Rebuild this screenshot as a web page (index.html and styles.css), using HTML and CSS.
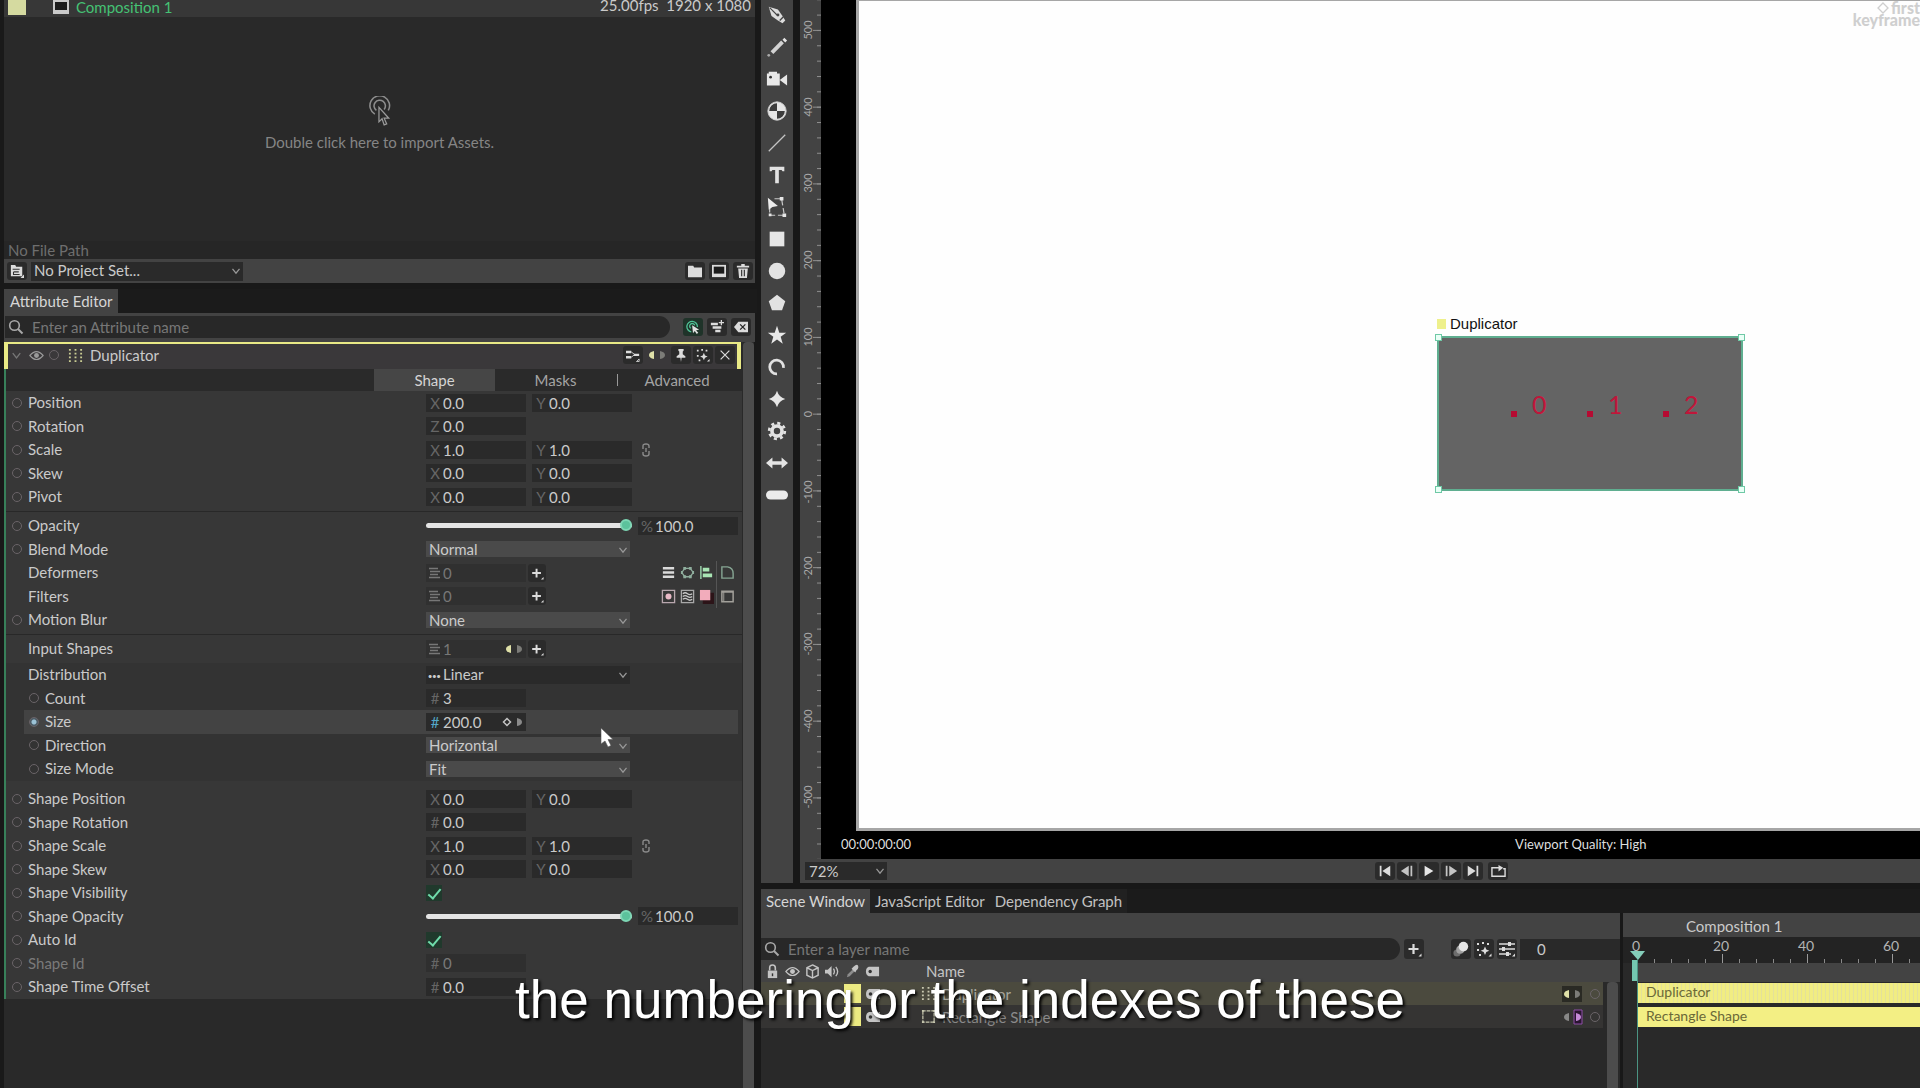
FILE: index.html
```html
<!DOCTYPE html>
<html lang="en">
<head>
<meta charset="utf-8">
<title>Composition 1</title>
<link rel="stylesheet" href="styles.css">
</head>
<body>
<svg class="defs" aria-hidden="true">
  <symbol id="chev" viewBox="0 0 16 16"><path d="M4 5.500l4 5 4-5" fill="none" stroke="currentColor" stroke-width="1.400"/></symbol>
  <symbol id="search" viewBox="0 0 16 16"><circle cx="6.500" cy="6.500" r="4.800" fill="none" stroke="currentColor" stroke-width="1.600"/><path d="M10 10l4.500 4.500" stroke="currentColor" stroke-width="2"/></symbol>
  <symbol id="comp" viewBox="0 0 16 16"><path d="M0 1h16v14H0z" fill="currentColor"/><path d="M2 3h12v8H2z" fill="#1c1c1c"/></symbol>
  <symbol id="folder" viewBox="0 0 16 16"><path d="M0 2h6l1 2h9v11H0z" fill="currentColor"/></symbol>
  <symbol id="trash" viewBox="0 0 16 16"><path d="M6 0h4v2h5v2H1V2h5zM2.500 5h11l-1 11h-9z" fill="currentColor"/><path d="M6.500 6.500v7.500M9.500 6.500v7.500" stroke="#222" stroke-width="1.200"/></symbol>
  <symbol id="project" viewBox="0 0 16 16"><path d="M1 1h5l1 2h7v11H1z" fill="currentColor"/><path d="M3 6h8M4 9h6M4 9v3h7" fill="none" stroke="#333" stroke-width="1.200"/><path d="M12 16h4v-4z" fill="currentColor"/></symbol>
  <symbol id="eye" viewBox="0 0 16 16"><path d="M1 8q7-8.500 14 0-7 8.500-14 0z" fill="none" stroke="currentColor" stroke-width="1.300"/><circle cx="8" cy="8" r="2.600" fill="currentColor"/></symbol>
  <symbol id="grid" viewBox="0 0 16 16"><path d="M1 1h2v2H1zM7 1h2v2H7zM13 1h2v2h-2zM1 5h2v2H1zM7 5h2v2H7zM13 5h2v2h-2zM1 9h2v2H1zM7 9h2v2H7zM13 9h2v2h-2zM1 13h2v2H1zM7 13h2v2H7zM13 13h2v2h-2z" fill="currentColor"/></symbol>
  <symbol id="link" viewBox="0 0 16 16"><path d="M5 7V4q0-2 3-2t3 2v2M11 9v3q0 2-3 2t-3-2v-2M8 6v4" fill="none" stroke="currentColor" stroke-width="1.400"/></symbol>
  <symbol id="plus" viewBox="0 0 16 16"><path d="M7.500 3v10M2.500 8h10" stroke="currentColor" stroke-width="2.200"/><path d="M12.500 15.500h3v-3z" fill="currentColor"/></symbol>
  <symbol id="list" viewBox="0 0 16 16"><path d="M2 3.500h9M3 6.500h10M3 9.500h8M2 12.500h11" stroke="currentColor" stroke-width="1.300"/></symbol>
  <symbol id="arrows" viewBox="0 0 24 16"><path d="M9 4v8q-5-1-5-4t5-4z" fill="#dfe0a8"/><path d="M15 4v8q5-1 5-4t-5-4z" fill="#7c7c78"/></symbol>
  <symbol id="keyed" viewBox="0 0 24 16"><path d="M5 4.500l3.500 3.500-3.500 3.500-3.500-3.500z" fill="none" stroke="#c4c4c4" stroke-width="1.500"/><path d="M15 4v8q5-1 5-4t-5-4z" fill="#8a8a8a"/></symbol>
  <symbol id="click" viewBox="0 0 16 16"><path d="M6 13.500A6 6 0 1 1 13 8M5.500 9.500A3 3 0 1 1 10 6" fill="none" stroke="#4fc296" stroke-width="1.500"/><path d="M7 6l8 5-3.500.700 2.500 3-1.700 1.200-2.300-3.200-2 2.300z" fill="#e0e0e0"/></symbol>
  <symbol id="addlayer" viewBox="0 0 16 16"><path d="M1 3h8v3H1zM3 7h10v3H3zM6 11h6v3H6z" fill="currentColor"/><path d="M13 0v6M10 3h6" stroke="currentColor" stroke-width="1.500"/></symbol>
  <symbol id="clear" viewBox="0 0 16 16"><path d="M0 8l5-6h11v12H5z" fill="currentColor"/><path d="M7 5l6 6M13 5l-6 6" stroke="#262626" stroke-width="1.500"/></symbol>
  <symbol id="tag" viewBox="0 0 16 16"><path d="M4 3h11v10H4Q1 12 1 8t3-5z" fill="currentColor"/><circle cx="5.500" cy="8" r="1.800" fill="#333"/></symbol>
  <symbol id="nodes" viewBox="0 0 16 16"><path d="M0 3h6v3H0zM0 9h6v3H0zM9 6.500h6v2.500H9z" fill="currentColor"/><path d="M6 4.500l4 3-4 3M12 15.500h3v-3z" fill="none" stroke="currentColor"/></symbol>
  <symbol id="pin" viewBox="0 0 16 16"><path d="M5 1h6v2l-1 1v3l3 2.500V11H8.700L8 16l-.700-5H3V9.500L6 7V4L5 3z" fill="currentColor"/></symbol>
  <symbol id="spark" viewBox="0 0 16 16"><path d="M1 2h2v2H1zM6 1h2v2H6zM11 2h2v2h-2zM1 8h2v2H1zM3 13h2v2H3zM12.500 15.500h3v-3z" fill="currentColor"/><path d="M9 5.500l1.300 3 3 1.300-3 1.300-1.300 3-1.300-3-3-1.300 3-1.300z" fill="currentColor"/></symbol>
  <symbol id="cross" viewBox="0 0 16 16"><path d="M3 3l10 10M13 3L3 13" stroke="currentColor" stroke-width="1.400"/></symbol>
  <symbol id="bars" viewBox="0 0 16 16"><path d="M2 3.500h12M2 8h12M2 12.500h12" stroke="#dadada" stroke-width="2.600"/></symbol>
  <symbol id="hex" viewBox="0 0 16 16"><path d="M5 3.500h6L14 8l-3 4.500H5L2 8z" fill="none" stroke="#8fae9d" stroke-width="1.400"/><path d="M3.500 2h3v3h-3zM9.500 2h3v3h-3zM3.500 11h3v3h-3zM9.500 11h3v3h-3zM1 6.500h2v3H1zM13 6.500h2v3h-2z" fill="#8fae9d"/></symbol>
  <symbol id="align" viewBox="0 0 16 16"><path d="M2 1v14" stroke="#9fd8af" stroke-width="1.500"/><path d="M4 3h7v4H4zM4 9h10v4H4z" fill="#a9e5b4"/></symbol>
  <symbol id="corner" viewBox="0 0 16 16"><path d="M2 2h6q6 1 6 7v5H2z" fill="none" stroke="#86a593" stroke-width="1.500"/></symbol>
  <symbol id="glow" viewBox="0 0 16 16"><path d="M1.500 1.500h13v13h-13z" fill="none" stroke="#b9a7ae" stroke-width="1.400"/><circle cx="8" cy="8" r="3.200" fill="#e8b9c6"/></symbol>
  <symbol id="waves" viewBox="0 0 16 16"><path d="M1.500 1.500h13v13h-13z" fill="none" stroke="#a8a8a8" stroke-width="1.400"/><path d="M3 5q2.500-2 5 0t5 0M3 8q2.500-2 5 0t5 0M3 11q2.500-2 5 0t5 0" fill="none" stroke="#c8c8c8" stroke-width="1.300"/></symbol>
  <symbol id="fill" viewBox="0 0 16 16"><path d="M4 4h12v12H4z" fill="#2c1418"/><path d="M1 1h11v11H1z" fill="#f2acbb"/></symbol>
  <symbol id="frame" viewBox="0 0 16 16"><path d="M2 2.500h12v11H2z" fill="none" stroke="#a2a09a" stroke-width="1.600"/><path d="M2 3.500h12M4 3v10" stroke="#a2a09a"/></symbol>
  <symbol id="lock" viewBox="0 0 16 16"><path d="M3 7h10v8H3z" fill="currentColor"/><path d="M5 7V4q0-3 3-3t3 3v3" fill="none" stroke="currentColor" stroke-width="1.700"/><path d="M8 10v3" stroke="#333" stroke-width="1.500"/></symbol>
  <symbol id="cube" viewBox="0 0 16 16"><path d="M8 1l6 3v8l-6 3-6-3V4zM2 4l6 3 6-3M8 7v8" fill="none" stroke="currentColor" stroke-width="1.500"/></symbol>
  <symbol id="sound" viewBox="0 0 16 16"><path d="M0 6h3l4-4v12l-4-4H0z" fill="currentColor"/><path d="M9 5q2 3 0 6M11.500 3q4 5 0 10" fill="none" stroke="currentColor" stroke-width="1.400"/></symbol>
  <symbol id="dropper" viewBox="0 0 16 16"><path d="M2 14l1-3 6-6 2 2-6 6z" fill="#8c8c8c"/><path d="M9 3q4-4 5-1t-2 5l-1 2-4-4z" fill="currentColor"/></symbol>
  <symbol id="box" viewBox="0 0 16 16"><path d="M2 2v12h12V2z" fill="none" stroke="currentColor" stroke-width="1.300" stroke-dasharray="4 1"/><path d="M1 1h2v2H1zM13 1h2v2h-2zM1 13h2v2H1zM13 13h2v2h-2z" fill="currentColor"/></symbol>
  <symbol id="balls" viewBox="0 0 20 20"><circle cx="5" cy="15" r="4.500" fill="#6d6d6d"/><circle cx="9" cy="11" r="5" fill="#a0a0a0"/><circle cx="13" cy="7" r="6" fill="#e6e6e6"/></symbol>
  <symbol id="sliders" viewBox="0 0 16 16"><path d="M0 3h16M0 8h16M0 13h12" stroke="currentColor" stroke-width="1.400"/><path d="M9 1h3v4H9zM3 6h3v4H3zM7 11h3v4H7zM13 15.500h3v-3z" fill="currentColor"/></symbol>
</svg>

<div class="app">
  <aside class="side">
    <section class="assets">
      <div class="asset-row">
        <span class="swatch"></span>
        <svg class="ic"><use href="#comp"/></svg>
        <span class="asset-name">Composition 1</span>
        <span class="asset-meta">25.00fps&nbsp; 1920 x 1080</span>
      </div>
      <div class="asset-drop">
        <svg class="drop-ic" viewBox="0 0 24 30"><path d="M7 17.500A9.500 9.500 0 1 1 20 14M8.500 14A5.500 5.500 0 1 1 16 13" fill="none" stroke="#8d8d8d" stroke-width="1.500"/><path d="M11 11v14l3-3 2 6 2.500-1-2.500-5.500h4.500z" fill="#292929" stroke="#9a9a9a" stroke-width="1.200"/></svg>
        <p>Double click here to import Assets.</p>
      </div>
      <p class="path">No File Path</p>
      <div class="asset-bar">
        <button class="ib" aria-label="Project settings"><svg><use href="#project"/></svg></button>
        <span class="sel dark project"><select aria-label="Project set"><option>No Project Set...</option></select><svg><use href="#chev"/></svg></span>
        <span class="bar-end">
          <button class="ib" aria-label="New folder"><svg><use href="#folder"/></svg></button>
          <button class="ib" aria-label="New composition"><svg><use href="#comp"/></svg></button>
          <button class="ib" aria-label="Delete"><svg><use href="#trash"/></svg></button>
        </span>
      </div>
    </section>

    <div class="tabs side-tabs"><button class="tab on">Attribute Editor</button></div>
    <div class="attr-search">
      <label class="search"><svg><use href="#search"/></svg><input placeholder="Enter an Attribute name" aria-label="Attribute name"></label>
      <span class="search-end">
        <button class="ib dark-green" aria-label="Follow selection"><svg><use href="#click"/></svg></button>
        <button class="ib" aria-label="Add layer"><svg><use href="#addlayer"/></svg></button>
        <button class="ib" aria-label="Clear"><svg><use href="#clear"/></svg></button>
      </span>
    </div>
    <div class="attr-body">
      <div class="attr-col">
        <header class="attr-head">
          <svg class="hi mute"><use href="#chev"/></svg>
          <svg class="hi"><use href="#eye"/></svg>
          <button class="key" aria-label="Key layer"></button>
          <svg class="hi gridic"><use href="#grid"/></svg>
          <h2>Duplicator</h2>
          <span class="head-end">
            <button class="ib" aria-label="Nodes"><svg><use href="#nodes"/></svg></button>
            <svg class="pair"><use href="#arrows"/></svg>
            <button class="ib" aria-label="Pin"><svg><use href="#pin"/></svg></button>
            <button class="ib" aria-label="Presets"><svg><use href="#spark"/></svg></button>
            <button class="ib" aria-label="Close"><svg><use href="#cross"/></svg></button>
          </span>
        </header>
        <div class="attrs">
          <nav class="attr-tabs"><button class="atab on">Shape</button><button class="atab">Masks</button><button class="atab last">Advanced</button></nav>
          <div class="group">
            <div class="row"><button class="key" aria-label="Key position"></button><span class="lab">Position</span><label class="field"><span>X</span><input aria-label="Position X" value="0.0"></label><label class="field"><span>Y</span><input aria-label="Position Y" value="0.0"></label></div>
            <div class="row"><button class="key" aria-label="Key rotation"></button><span class="lab">Rotation</span><label class="field"><span>Z</span><input aria-label="Rotation Z" value="0.0"></label></div>
            <div class="row"><button class="key" aria-label="Key scale"></button><span class="lab">Scale</span><label class="field"><span>X</span><input aria-label="Scale X" value="1.0"></label><label class="field"><span>Y</span><input aria-label="Scale Y" value="1.0"></label><button class="lk" aria-label="Link scale"><svg><use href="#link"/></svg></button></div>
            <div class="row"><button class="key" aria-label="Key skew"></button><span class="lab">Skew</span><label class="field"><span>X</span><input aria-label="Skew X" value="0.0"></label><label class="field"><span>Y</span><input aria-label="Skew Y" value="0.0"></label></div>
            <div class="row"><button class="key" aria-label="Key pivot"></button><span class="lab">Pivot</span><label class="field"><span>X</span><input aria-label="Pivot X" value="0.0"></label><label class="field"><span>Y</span><input aria-label="Pivot Y" value="0.0"></label></div>
          </div>
          <div class="group">
            <div class="row"><button class="key" aria-label="Key opacity"></button><label class="lab" for="op">Opacity</label><input id="op" type="range" value="100"><label class="field"><span>%</span><input aria-label="Opacity percent" value="100.0"></label></div>
            <div class="row"><button class="key" aria-label="Key blend mode"></button><label class="lab" for="bm">Blend Mode</label><span class="sel"><select id="bm"><option>Normal</option></select><svg><use href="#chev"/></svg></span></div>
            <div class="row many"><i class="nokey"></i><label class="lab" for="df">Deformers</label><span class="field dim"><svg><use href="#list"/></svg><input id="df" value="0" readonly></span><button class="ib" aria-label="Add deformer"><svg><use href="#plus"/></svg></button>
              <span class="quick"><button class="qb" aria-label="Stack"><svg><use href="#bars"/></svg></button><button class="qb" aria-label="Polygon"><svg><use href="#hex"/></svg></button><button class="qb" aria-label="Align"><svg><use href="#align"/></svg></button><i class="vr"></i><button class="qb" aria-label="Round corners"><svg><use href="#corner"/></svg></button></span></div>
            <div class="row many"><i class="nokey"></i><label class="lab" for="fl">Filters</label><span class="field dim"><svg><use href="#list"/></svg><input id="fl" value="0" readonly></span><button class="ib" aria-label="Add filter"><svg><use href="#plus"/></svg></button>
              <span class="quick"><button class="qb" aria-label="Glow"><svg><use href="#glow"/></svg></button><button class="qb" aria-label="Distort"><svg><use href="#waves"/></svg></button><button class="qb" aria-label="Fill"><svg><use href="#fill"/></svg></button><i class="vr"></i><button class="qb" aria-label="Frame"><svg><use href="#frame"/></svg></button></span></div>
            <div class="row"><button class="key" aria-label="Key motion blur"></button><label class="lab" for="mb">Motion Blur</label><span class="sel"><select id="mb"><option>None</option></select><svg><use href="#chev"/></svg></span></div>
          </div>
          <div class="group shade">
            <div class="row many"><i class="nokey"></i><label class="lab" for="is">Input Shapes</label><span class="field dim"><svg><use href="#list"/></svg><input id="is" value="1" readonly><svg class="pair"><use href="#arrows"/></svg></span><button class="ib" aria-label="Add input shape"><svg><use href="#plus"/></svg></button></div>
            <div class="sub">
              <div class="row"><i class="nokey"></i><label class="lab" for="di">Distribution</label><span class="sel dark dots"><select id="di"><option>Linear</option></select><svg><use href="#chev"/></svg></span></div>
              <div class="row in"><button class="key" aria-label="Key count"></button><label class="lab" for="ct">Count</label><span class="field"><span>#</span><input id="ct" value="3"></span></div>
              <div class="row in hot"><button class="key set" aria-label="Key size"></button><label class="lab" for="sz">Size</label><span class="field keyed"><span>#</span><input id="sz" value="200.0"><svg class="pair"><use href="#keyed"/></svg></span></div>
              <div class="row in"><button class="key" aria-label="Key direction"></button><label class="lab" for="dr">Direction</label><span class="sel"><select id="dr"><option>Horizontal</option></select><svg><use href="#chev"/></svg></span></div>
              <div class="row in"><button class="key" aria-label="Key size mode"></button><label class="lab" for="sm">Size Mode</label><span class="sel"><select id="sm"><option>Fit</option></select><svg><use href="#chev"/></svg></span></div>
            </div>
          </div>
          <div class="group last">
            <div class="row"><button class="key" aria-label="Key shape position"></button><span class="lab">Shape Position</span><label class="field"><span>X</span><input aria-label="Shape position X" value="0.0"></label><label class="field"><span>Y</span><input aria-label="Shape position Y" value="0.0"></label></div>
            <div class="row"><button class="key" aria-label="Key shape rotation"></button><span class="lab">Shape Rotation</span><label class="field"><span>#</span><input aria-label="Shape rotation" value="0.0"></label></div>
            <div class="row"><button class="key" aria-label="Key shape scale"></button><span class="lab">Shape Scale</span><label class="field"><span>X</span><input aria-label="Shape scale X" value="1.0"></label><label class="field"><span>Y</span><input aria-label="Shape scale Y" value="1.0"></label><button class="lk" aria-label="Link shape scale"><svg><use href="#link"/></svg></button></div>
            <div class="row"><button class="key" aria-label="Key shape skew"></button><span class="lab">Shape Skew</span><label class="field"><span>X</span><input aria-label="Shape skew X" value="0.0"></label><label class="field"><span>Y</span><input aria-label="Shape skew Y" value="0.0"></label></div>
            <div class="row"><button class="key" aria-label="Key shape visibility"></button><label class="lab" for="sv">Shape Visibility</label><input id="sv" type="checkbox" checked></div>
            <div class="row"><button class="key" aria-label="Key shape opacity"></button><label class="lab" for="so">Shape Opacity</label><input id="so" type="range" value="100"><label class="field"><span>%</span><input aria-label="Shape opacity percent" value="100.0"></label></div>
            <div class="row"><button class="key" aria-label="Key auto id"></button><label class="lab" for="ai">Auto Id</label><input id="ai" type="checkbox" checked></div>
            <div class="row off"><button class="key" aria-label="Key shape id"></button><label class="lab" for="si">Shape Id</label><span class="field"><span>#</span><input id="si" value="0" readonly></span></div>
            <div class="row"><button class="key" aria-label="Key shape time offset"></button><label class="lab" for="st">Shape Time Offset</label><span class="field"><span>#</span><input id="st" value="0.0"></span></div>
          </div>
        </div>
      </div>
      <div class="thumb"></div>
    </div>
  </aside>

  <main class="main">
    <div class="stage">
      <nav class="tools">
        <button aria-label="Pen"><svg viewBox="0 0 24 24"><path d="M3 3l10 3 5 7 3 5-3 3-5-3-7-5z" fill="#dcdcdc"/><path d="M4 4l8 8" stroke="#444" stroke-width="1.200"/><circle cx="13" cy="12" r="1.600" fill="#444"/><path d="M15 18l4-4" stroke="#444" stroke-width="1.500"/></svg></button>
        <button aria-label="Pencil"><svg viewBox="0 0 24 24"><path d="M5 16.500L16.500 5l3 3L8 19.500z" fill="#d2d2d2"/><path d="M18 4l2-2 3 3-2 2z" fill="#e6e6e6"/><circle cx="3" cy="21" r="1.500" fill="#aaa"/></svg></button>
        <button aria-label="Camera"><svg viewBox="0 0 24 24"><path d="M1 6h14v13H1zM3 4h9v3H3zM15 13l8-6v12z" fill="#e8e8e8"/><circle cx="5" cy="10" r="1.500" fill="#333"/></svg></button>
        <button aria-label="Null"><svg viewBox="0 0 24 24"><circle cx="12" cy="12" r="10" fill="#e6e6e6" stroke="#ccc"/><path d="M12 12V3.500A8.500 8.500 0 0 0 3.500 12zM12 12v8.500a8.500 8.500 0 0 0 8.500-8.500z" fill="#3c3c3c"/></svg></button>
        <button aria-label="Line"><svg viewBox="0 0 24 24"><path d="M3 21L21 3" stroke="#c4c4c4" stroke-width="1.300"/></svg></button>
        <button aria-label="Text"><svg viewBox="0 0 24 24"><path d="M4 3h16v5h-2l-1-1.500h-3V21h-4V6.500H7L6 8H4z" fill="#e2e2e2"/></svg></button>
        <button aria-label="Edit shape"><svg viewBox="0 0 24 24"><path d="M4 12v9h16L17 3H8" fill="none" stroke="#c8c8c8" stroke-width="1.300" stroke-dasharray="6 3"/><path d="M2 2l11 9-6 1-4 3z" fill="#ececec"/><path d="M3 19h3v3H3zM18 19h4v4h-4zM15 1h4v4h-4z" fill="#e6e6e6"/></svg></button>
        <button aria-label="Rectangle"><svg viewBox="0 0 24 24"><path d="M4 4h16v16H4z" fill="#e6e6e6"/></svg></button>
        <button aria-label="Ellipse"><svg viewBox="0 0 24 24"><circle cx="12" cy="12" r="9" fill="#e2e2e2"/></svg></button>
        <button aria-label="Polygon"><svg viewBox="0 0 24 24"><path d="M12 3l9 7-3.500 10h-11L3 10z" fill="#e2e2e2"/></svg></button>
        <button aria-label="Star"><svg viewBox="0 0 24 24"><path d="M12 2l2.500 7.500H22l-6 4.500 2.300 7.500L12 17l-6.300 4.500L8 14 2 9.500h7.500z" fill="#e8e8e8"/></svg></button>
        <button aria-label="Arc"><svg viewBox="0 0 24 24"><path d="M12 19.500A7.500 7.500 0 1 1 19 13" fill="none" stroke="#e0e0e0" stroke-width="3"/></svg></button>
        <button aria-label="Super ellipse"><svg viewBox="0 0 24 24"><path d="M12 3q2 7 9 9-7 2-9 9-2-7-9-9 7-2 9-9z" fill="#e6e6e6"/></svg></button>
        <button aria-label="Cog"><svg viewBox="0 0 24 24"><circle cx="12" cy="12" r="5.500" fill="none" stroke="#e2e2e2" stroke-width="4"/><circle cx="12" cy="12" r="8.500" fill="none" stroke="#e2e2e2" stroke-width="3" stroke-dasharray="3.340 3.335"/></svg></button>
        <button aria-label="Arrow"><svg viewBox="0 0 24 24"><path d="M0 12l7-6v4h10V6l7 6-7 6v-4H7v4z" fill="#e4e4e4"/></svg></button>
        <button aria-label="Capsule"><svg viewBox="0 0 24 24"><rect x="0" y="7" width="24" height="10" rx="5" fill="#ebebeb"/></svg></button>
      </nav>
      <div class="view">
        <div class="canvas-row">
          <svg class="ruler" aria-label="Vertical ruler">
            <defs><pattern id="vt" width="21" height="15.350" y="14.600" patternUnits="userSpaceOnUse"><path d="M17 .500h4" stroke="#8f8f8f"/></pattern>
            <pattern id="vm" width="21" height="76.750" y="29.900" patternUnits="userSpaceOnUse"><path d="M13 .500h8" stroke="#8f8f8f"/></pattern></defs>
            <rect width="21" height="100%" fill="url(#vt)"/><rect width="21" height="100%" fill="url(#vm)"/>
            <g class="rl">
              <text transform="translate(12 30) rotate(-90)">500</text><text transform="translate(12 107) rotate(-90)">400</text><text transform="translate(12 183) rotate(-90)">300</text><text transform="translate(12 260) rotate(-90)">200</text><text transform="translate(12 337) rotate(-90)">100</text><text transform="translate(12 414) rotate(-90)">0</text><text transform="translate(12 492) rotate(-90)">-100</text><text transform="translate(12 568) rotate(-90)">-200</text><text transform="translate(12 644) rotate(-90)">-300</text><text transform="translate(12 721) rotate(-90)">-400</text><text transform="translate(12 797) rotate(-90)">-500</text>
            </g>
          </svg>
          <div class="screen">
            <div class="canvas">
              <div class="node-label"><i></i>Duplicator</div>
              <div class="node"><b class="h tl"></b><b class="h tr"></b><b class="h bl"></b><b class="h br"></b>
                <span class="pt p0">0</span><span class="pt p1">1</span><span class="pt p2">2</span></div>
              <div class="mark"><span><svg viewBox="0 0 12 12"><path d="M6 1l5 5-5 5-5-5z" fill="none" stroke="#cfcfcf" stroke-width="1.300"/></svg>first</span><span>keyframe</span></div>
            </div>
            <div class="status"><span>00:00:00:00</span><span class="quality">Viewport Quality: High</span></div>
          </div>
        </div>
        <div class="view-bar">
          <span class="sel dark zoom"><select aria-label="Zoom"><option>72%</option></select><svg><use href="#chev"/></svg></span>
          <span class="play">
            <button class="ib" aria-label="First frame"><svg viewBox="0 0 16 16"><path d="M2 2h2v12H2zM14 2v12L5 8z" fill="#dcdcdc"/></svg></button>
            <button class="ib" aria-label="Previous frame"><svg viewBox="0 0 16 16"><path d="M10 2v12L1 8zM12 2h2v12h-2z" fill="#c4c4c4"/></svg></button>
            <button class="ib" aria-label="Play"><svg viewBox="0 0 16 16"><path d="M3 2v12l10-6z" fill="#e6e6e6"/></svg></button>
            <button class="ib" aria-label="Next frame"><svg viewBox="0 0 16 16"><path d="M6 2v12l9-6zM2 2h2v12H2z" fill="#c4c4c4"/></svg></button>
            <button class="ib" aria-label="Last frame"><svg viewBox="0 0 16 16"><path d="M2 2v12l9-6zM12 2h2v12h-2z" fill="#dcdcdc"/></svg></button>
            <button class="ib loop" aria-label="Loop"><svg viewBox="0 0 16 16"><path d="M4 4H1v9h14V5h-2M4 4h5" fill="none" stroke="#dcdcdc" stroke-width="1.500"/><path d="M8 1l5 3-5 4z" fill="#dcdcdc"/></svg></button>
          </span>
        </div>
      </div>
    </div>

    <div class="tabs scene-tabs"><button class="tab on">Scene Window</button><button class="tab">JavaScript Editor</button><button class="tab">Dependency Graph</button></div>
    <div class="scene">
      <section class="layers">
        <div class="layer-bar">
          <label class="search"><svg><use href="#search"/></svg><input placeholder="Enter a layer name" aria-label="Layer name"></label>
          <button class="ib add" aria-label="Add"><svg><use href="#plus"/></svg></button>
          <button class="ib" aria-label="Motion blur"><svg><use href="#balls"/></svg></button>
          <button class="ib" aria-label="Effects"><svg><use href="#spark"/></svg></button>
          <button class="ib" aria-label="Settings"><svg><use href="#sliders"/></svg></button>
          <input class="frame" aria-label="Frame" value="0">
        </div>
        <div class="layer-head"><svg><use href="#lock"/></svg><svg><use href="#eye"/></svg><svg><use href="#cube"/></svg><svg><use href="#sound"/></svg><svg><use href="#dropper"/></svg><svg><use href="#tag"/></svg><span>Name</span></div>
        <div class="layer-body">
          <div class="layer-rows">
            <div class="layer sel-row"><i></i><svg class="tg"><use href="#tag"/></svg><svg class="lt"><use href="#grid"/></svg><span>Duplicator</span><svg class="pair boxed" viewBox="0 0 24 16"><path d="M2 0h20v16H2z" fill="#2a2a24"/><use href="#arrows"/></svg><b class="key"></b></div>
            <div class="layer"><i></i><svg class="tg"><use href="#tag"/></svg><svg class="lt"><use href="#box"/></svg><span>Rectangle Shape</span><svg class="pair" viewBox="0 0 24 16"><path d="M9 4v8q-5-1-5-4t5-4z" fill="#888"/><path d="M14 1h8v14h-8z" fill="#2a1530" stroke="#8f4fa8"/><path d="M16 4v8q5-1 5-4t-5-4z" fill="#c58ad8"/></svg><b class="key"></b></div>
          </div>
          <div class="thumb"></div>
        </div>
      </section>
      <section class="timeline">
        <h3>Composition 1</h3>
        <svg class="truler" aria-label="Timeline ruler">
          <defs><pattern id="tm" width="17" height="26" x="14" patternUnits="userSpaceOnUse"><path d="M.500 22v4" stroke="#8a8a8a"/></pattern><pattern id="tM" width="85" height="26" x="14" patternUnits="userSpaceOnUse"><path d="M.500 17v9" stroke="#9a9a9a"/></pattern></defs>
          <rect x="14" width="100%" height="26" fill="url(#tm)"/><rect x="14" width="100%" height="26" fill="url(#tM)"/>
          <text x="13" y="14">0</text><text x="98" y="14">20</text><text x="183" y="14">40</text><text x="268" y="14">60</text>
        </svg>
        <div class="range"></div>
        <div class="bars"><div class="clip grain">Duplicator</div><div class="clip">Rectangle Shape</div></div>
        <svg class="head" viewBox="0 0 16 137" preserveAspectRatio="xMidYMin slice"><path d="M0 0h15L8 9z" fill="#84cdb9"/><path d="M2 9h5v21H2z" fill="#74c7b0"/><path d="M7.500 8v140" stroke="#4b9482"/></svg>
      </section>
    </div>
  </main>
</div>
<svg class="cursor" viewBox="0 0 14 22"><path d="M1 1v16l4-3 3 6 3-1.500-3-6h5z" fill="#fff" stroke="#555" stroke-width=".600"/></svg>
<p class="caption">the numbering or the indexes of these</p>
</body>
</html>
```
FILE: styles.css
```css
* { box-sizing: border-box; margin: 0; padding: 0; }
body { background: #181818; color: #cacaca; font: 15px/18px Lato, "Liberation Sans", sans-serif; overflow: hidden; }
button, input, select { font: inherit; color: inherit; background: none; border: 0; outline: 0; min-width: 0; }
svg { display: block; width: 16px; height: 16px; flex: none; }
.defs { position: absolute; width: 0; height: 0; }
.app { display: grid; grid-template-columns: 761px 1fr; height: 100vh; }

/* shared controls */
.ib { width: 20px; height: 18px; display: grid; place-items: center; background: #2b2b2b; border-radius: 3px; flex: none; color: #dcdcdc; }
.ib svg { width: 14px; height: 14px; }
.key { width: 10px; height: 10px; border: 1px solid #6a6468; border-radius: 50%; flex: none; }
.sel { display: grid; width: 204px; background: #4a4a4a; height: 16px; align-items: center; }
.sel select { grid-area: 1/1; appearance: none; width: 100%; height: 18px; line-height: 16px; padding: 0 0 2px 3px; }
.sel svg { grid-area: 1/1; justify-self: end; width: 14px; height: 14px; color: #999; pointer-events: none; }
.sel.dark { background: #2a2a2a; }
.search { display: flex; align-items: center; background: #282828; border-radius: 0 11px 11px 0; flex: 1; height: 22px; padding-left: 3px; gap: 8px; color: #a8a8a8; }
.search input { flex: 1; }
.search input::placeholder { color: #777; opacity: 1; }
.tabs { display: flex; background: #1b1b1b; flex: none; }
.tab { height: 24px; padding: 0 6px; color: #c2c2c2; background: #212121; }
.tab.on { background: #434343; color: #d6d6d6; }
.pair { width: 24px; height: 16px; }

/* assets */
.side { display: flex; flex-direction: column; padding-left: 4px; background: #191919; min-height: 0; }
.assets { display: flex; flex-direction: column; margin-right: 6px; height: 283px; background: #292929; flex: none; }
.asset-row { display: flex; align-items: center; height: 17px; padding: 0 4px; background: #373737; line-height: 14px; }
.swatch { width: 18px; height: 15px; background: #d5daa0; margin-right: 27px; align-self: flex-start; }
.asset-row .ic { margin-bottom: 4px; }
.asset-name { color: #45c274; margin-left: 7px; padding-bottom: 4px; }
.asset-meta { margin-left: auto; padding-bottom: 8px; }
.asset-drop { flex: 1; display: flex; flex-direction: column; align-items: center; justify-content: center; color: #858585; gap: 6px; padding-bottom: 12px; }
.drop-ic { width: 26px; height: 31px; }
.path { background: #262626; color: #6e6e6e; padding: 0 4px; height: 18px; }
.asset-bar { display: flex; align-items: center; gap: 4px; background: #434343; height: 24px; padding: 0 2px 0 3px; }
.project { width: 212px; height: 19px; }
.bar-end { display: flex; gap: 4px; margin-left: auto; }

/* attribute editor */
.side-tabs { margin: 6px 4px 0 0; }
.side-tabs .tab { padding: 0 5px 1px 6px; }
.attr-search { display: flex; align-items: center; background: #434343; height: 29px; margin-right: 6px; padding: 0 4px 2px 1px; flex: none; }
.search-end { display: flex; gap: 4px; padding-left: 13px; }
.dark-green { background: #1f3329; }
.attr-body { flex: 1; display: flex; background: #292929; margin-right: 7px; min-height: 0; }
.attr-col { flex: 1; }
.thumb { width: 11px; background: #4c4c4c; border-radius: 4px 4px 0 0; margin-left: 1px; }
.attr-head { display: flex; align-items: center; height: 27px; background: #3a383a; border: solid #e9ea86; border-width: 2px 4px 0; margin-right: 1px; gap: 5px; padding: 0 0 3px 1px; }
.attr-head h2 { font-size: 15px; font-weight: 400; margin-left: 2px; }
.hi { width: 15px; height: 15px; color: #9a9a9a; }
.mute { color: #777; }
.gridic { color: #c9cc93; margin-left: 4px; }
.head-end { display: flex; align-items: center; gap: 2px; margin-left: auto; padding-right: 2px; }
.attrs { border-left: 2px solid #38805a; background: #373737; }
.attr-tabs { display: flex; justify-content: flex-end; background: #2a2a2a; height: 22px; }
.atab { width: 121px; color: #a4a4a4; }
.atab.on { background: #464646; color: #d4d4d4; }
.atab.last { width: 126px; padding-right: 4px; background: linear-gradient(#999, #999) 1px 50%/1px 12px no-repeat; }
.group { border-bottom: 1px solid #282828; padding: 2px 0; }
.attr-tabs + .group { padding-top: 0; }
.group.last { border: 0; padding-bottom: 0; padding-top: 6px; }
.group.shade { border: 0; padding-bottom: 0; }
.sub { background: #333; margin-top: 2px; }
.row { display: flex; align-items: center; gap: 6px; height: 24px; padding: 0 0 1px 6px; }
.row:nth-child(even) { height: 23px; }
.nokey { width: 10px; flex: none; }
.lab { width: 392px; flex: none; padding-bottom: 1px; }
.row.in { margin-left: 18px; padding-left: 5px; }
.in .lab { width: 375px; }
.row.hot { background: #434343; margin-right: 4px; }
.key.set { background: radial-gradient(#9cc3d6 2px, #4c5c66 3px); }
.field { display: flex; align-items: center; width: 100px; height: 18px; background: #2a2a2a; flex: none; padding-left: 1px; }
.field > span { width: 16px; color: #666; text-align: center; }
.field input { flex: 1; }
.field.keyed > span { color: #54a8c8; }
.field.dim { color: #777; background: #303030; }
.off { color: #7a7a7a; }
.off .field { background: #2f2f2f; }
.many .ib { width: 18px; margin-left: -4px; }
.quick { display: flex; align-items: center; gap: 1px; margin-left: auto; padding-right: 6px; }
.qb { width: 18px; height: 18px; display: grid; place-items: center; }
.qb svg { width: 15px; height: 15px; }
.vr { width: 1px; height: 24px; background: #555; }
.lk { color: #8a8a8a; }
.dots { grid-template-columns: 16px 1fr; }
.sel.dots select { grid-area: 1/2; padding-left: 1px; }
.sel.dots svg { grid-area: 1/2; }
.dots::before { content: "···"; grid-area: 1/1; font-weight: 900; padding-left: 2px; }
.sel.dark.dots { height: 18px; }
input[type=range] { appearance: none; width: 206px; height: 12px; }
input[type=range]::-webkit-slider-runnable-track { height: 5px; border-radius: 3px; background: #e4e4e4; }
input[type=range]::-webkit-slider-thumb { appearance: none; width: 12px; height: 12px; margin-top: -4px; border-radius: 50%; background: #5cc29c; border: 2px solid #7dd6b4; }
input[type=checkbox] { appearance: none; width: 16px; height: 16px; background: #20392c; display: grid; place-items: center; }
input[type=checkbox]::before { content: ""; width: 5px; height: 11px; border: solid #6fdcab; border-width: 0 2px 2px 0; transform: rotate(40deg); }

/* viewport */
.main { display: flex; flex-direction: column; min-width: 0; }
.stage { flex: 1; display: flex; gap: 7px; min-height: 0; }
.tools { width: 32px; background: #434343; display: flex; flex-direction: column; align-items: center; }
.tools button { height: 32px; width: 32px; padding-bottom: 2px; display: grid; place-items: center; flex: none; }
.tools svg { width: 22px; height: 22px; }
.view { flex: 1; display: flex; flex-direction: column; min-width: 0; }
.canvas-row { flex: 1; display: flex; min-height: 0; background: #000; }
.ruler { width: 21px; height: 100%; background: #434343; }
.rl text { font-size: 11px; fill: #a8a8a8; text-anchor: middle; }
.screen { flex: 1; display: flex; flex-direction: column; padding-left: 35px; }
.canvas { flex: 1; background: #fefefe; border: solid #a6a6a6; border-width: 1px 0 3px 3px; position: relative; }
.node { position: absolute; left: 578px; top: 335px; width: 306px; height: 155px; background: #646464; border: 2px solid #5fae90; }
.node-label { position: absolute; left: 578px; top: 314px; display: flex; align-items: center; gap: 4px; color: #111; font: 15px/18px "Liberation Sans", sans-serif; }
.node-label i { width: 9px; height: 10px; background: #eef08c; }
.h { position: absolute; width: 7px; height: 7px; background: #e9fff6; border: 1px solid #6fc9a6; }
.tl { left: -4px; top: -4px; } .tr { right: -4px; top: -4px; } .bl { left: -4px; bottom: -4px; } .br { right: -4px; bottom: -4px; }
.pt { position: absolute; top: 51px; padding-left: 21px; font-size: 25px; line-height: 30px; color: #c0163a; }
.pt::before { content: ""; position: absolute; left: 0; top: 22px; width: 6px; height: 6px; background: #b50a32; }
.p0 { left: 72px; } .p1 { left: 148px; } .p2 { left: 224px; }
.mark { position: absolute; right: 0; top: 1px; color: #cfcfcf; font: 900 16px/12px Lato, sans-serif; display: flex; flex-direction: column; align-items: flex-end; }
.mark span { display: flex; align-items: center; gap: 2px; }
.mark svg { width: 12px; height: 12px; }
.status { height: 28px; display: flex; align-items: center; font-size: 13px; color: #dedede; margin-left: -15px; padding-bottom: 3px; }
.quality { margin-left: 604px; }
.view-bar { height: 24px; background: #434343; display: flex; align-items: center; padding-left: 5px; }
.zoom { width: 82px; height: 18px; }
.sel.zoom select { padding: 0 0 0 4px; }
.play { display: flex; gap: 2px; margin-left: 488px; }
.loop { margin-left: 3px; }
.ib.loop svg { width: 17px; height: 15px; }

/* scene window */
.scene-tabs { margin-top: 6px; }
.scene-tabs .tab { padding: 0 5px 1px; }
.scene { height: 175px; display: flex; flex: none; }
.layers { width: 859px; background: #434343; display: flex; flex-direction: column; padding-top: 25px; }
.layer-bar { display: flex; align-items: center; gap: 3px; height: 22px; flex: none; }
.layer-bar .ib { height: 20px; }
.layer-bar .ib svg { width: 16px; height: 16px; }
.layer-bar .ib.add { margin: 0 24px 0 1px; }
.frame { width: 100px; height: 21px; background: #292929; padding-left: 17px; }
.layer-head { display: flex; align-items: center; height: 22px; gap: 5px; padding-left: 4px; color: #c4c4c4; flex: none; }
.layer-head svg { width: 15px; height: 15px; }
.layer-head span { margin-left: 41px; }
.layer-body { flex: 1; display: flex; background: #292929; }
.layer-rows { flex: 1; }
.layer-body .thumb { margin: 0 2px 0 4px; }
.layer { display: flex; align-items: center; height: 23px; background: #353433; color: #8a8a8a; padding-left: 83px; }
.layer.sel-row { background: #4b4a3e; color: #a8a8a0; }
.layer i { width: 17px; height: 19px; background: #ecea82; margin-right: 4px; }
.layer .tg { color: #c4c4c4; margin-right: 40px; }
.layer .lt { color: #c8c8b0; margin-right: 6px; width: 15px; height: 15px; }
.layer .pair { margin-left: auto; }
.layer .key { margin: 0 3px 0 6px; }
.timeline { flex: 1; display: flex; flex-direction: column; background: #292929; position: relative; min-width: 0; margin-left: 3px; }
.timeline h3 { font-size: 15px; font-weight: 400; background: #434343; height: 24px; line-height: 26px; padding-left: 63px; }
.truler { width: 100%; height: 26px; background: #232323; }
.truler text { fill: #b4b4b4; font-size: 14px; text-anchor: middle; }
.range { height: 19px; background: #434343; margin-left: 15px; flex: none; }
.bars { flex: 1; margin-left: 15px; padding-top: 1px; }
.clip { height: 20px; background: #f3ef84; color: #6a6838; font-size: 14px; line-height: 18px; padding-left: 8px; margin-bottom: 4px; }
.clip.grain { background: repeating-linear-gradient(90deg, #f1ed82 0 3px, #e4e19a 3px 4px); }
.head { position: absolute; left: 7px; top: 38px; width: 16px; height: 137px; }

/* overlays */
.cursor { position: absolute; left: 600px; top: 727px; width: 14px; height: 22px; }
.caption { position: absolute; left: 0; right: 0; bottom: 58px; text-align: center; color: #fff; font: 53px/60px "Liberation Sans", Arial, sans-serif; text-shadow: 2px 2px 3px #000; }
```
